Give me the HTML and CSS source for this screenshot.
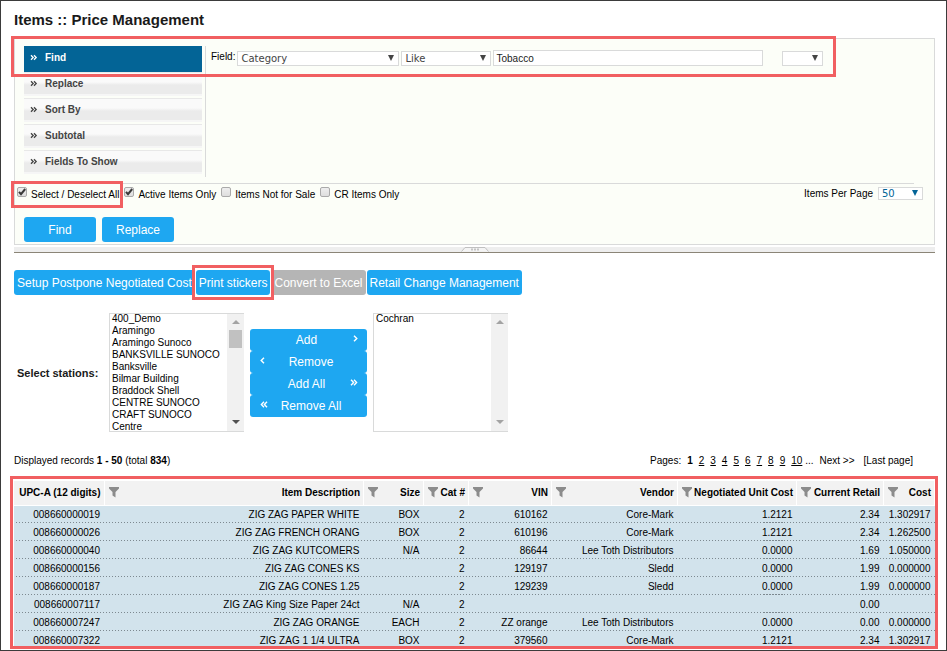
FILE: index.html
```html
<!DOCTYPE html>
<html lang="en">
<head>
<meta charset="utf-8">
<title>Items :: Price Management</title>
<link rel="stylesheet" href="styles.css">
</head>
<body>
<svg class="defs" aria-hidden="true">
  <symbol id="funnel" viewBox="0 0 10 11"><path d="M0 0H10V1.5L6.5 5V10.5L3.5 8.5V5L0 1.5Z"/></symbol>
  <symbol id="check" viewBox="0 0 10 10"><path d="M2 4.8L4 7.2L8.2 2" fill="none" stroke="#3a3a3a" stroke-width="2"/></symbol>
  <symbol id="chevron" viewBox="0 0 5 7"><path d="M1 .7L3.8 3.5L1 6.3" fill="none" stroke="currentColor" stroke-width="1.4"/></symbol>
  <symbol id="chevrons" viewBox="0 0 8 7"><path d="M1 .7L3.6 3.5L1 6.3M4 .7L6.6 3.5L4 6.3" fill="none" stroke="currentColor" stroke-width="1.4"/></symbol>
  <symbol id="bullet" viewBox="0 0 8 7"><path d="M1 1.2L3.2 3.5L1 5.8M4 1.2L6.2 3.5L4 5.8" fill="none" stroke="currentColor" stroke-width="1.3"/></symbol>
</svg>
<div class="page">
  <h1>Items :: Price Management</h1>

  <form class="panel">
    <div class="filters">
      <nav class="tabs">
        <a class="tab active" href="#find"><svg class="bullet"><use href="#bullet"/></svg>Find</a>
        <a class="tab" href="#replace"><svg class="bullet"><use href="#bullet"/></svg>Replace</a>
        <a class="tab" href="#sort"><svg class="bullet"><use href="#bullet"/></svg>Sort By</a>
        <a class="tab" href="#subtotal"><svg class="bullet"><use href="#bullet"/></svg>Subtotal</a>
        <a class="tab" href="#fields"><svg class="bullet"><use href="#bullet"/></svg>Fields To Show</a>
      </nav>
      <div class="criteria">
        <label for="field">Field:</label>
        <span class="drop field"><select id="field"><option>Category</option></select></span>
        <span class="drop operator"><select aria-label="Operator"><option>Like</option></select></span>
        <input class="value" type="text" value="Tobacco" aria-label="Value">
        <span class="drop join"><select aria-label="Join"><option></option></select></span>
      </div>
    </div>
    <div class="options">
      <div class="check"><span class="box"><input id="all" type="checkbox" checked><svg class="tick"><use href="#check"/></svg></span><label for="all">Select / Deselect All</label></div>
      <div class="check"><span class="box"><input id="active" type="checkbox" checked><svg class="tick"><use href="#check"/></svg></span><label for="active">Active Items Only</label></div>
      <div class="check"><span class="box"><input id="notsale" type="checkbox"></span><label for="notsale">Items Not for Sale</label></div>
      <div class="check"><span class="box"><input id="cr" type="checkbox"></span><label for="cr">CR Items Only</label></div>
      <div class="per-page"><label for="perpage">Items Per Page</label><span class="drop"><select id="perpage"><option>50</option></select></span></div>
      <span class="mark mark-all"></span>
    </div>
    <div class="submit">
      <button class="btn wide" type="button">Find</button>
      <button class="btn wide" type="button">Replace</button>
    </div>
    <span class="mark mark-find"></span>
  </form>
  <div class="splitter"><svg class="grip" viewBox="0 0 28 5"><path d="M.5 4.5L4 .5H24L27.5 4.5" fill="#f4f4f4" stroke="#c0c0c0"/><path d="M10 2.5H18" stroke="#c4c4c4" stroke-width="2" stroke-dasharray="2 1"/></svg></div>

  <div class="actions">
    <button class="btn" type="button">Setup Postpone Negotiated Cost</button>
    <span class="marked"><button class="btn" type="button">Print stickers</button><span class="mark mark-print"></span></span>
    <button class="btn" type="button" disabled>Convert to Excel</button>
    <button class="btn" type="button">Retail Change Management</button>
  </div>

  <div class="stations">
    <label class="stations-label" for="available">Select stations:</label>
    <div class="list">
      <select id="available" multiple>
        <option>400_Demo</option><option>Aramingo</option><option>Aramingo Sunoco</option><option>BANKSVILLE SUNOCO</option><option>Banksville</option><option>Bilmar Building</option><option>Braddock Shell</option><option>CENTRE SUNOCO</option><option>CRAFT SUNOCO</option><option>Centre</option>
      </select>
      <span class="scroll"><i class="up"></i><i class="thumb"></i><i class="down dark"></i></span>
    </div>
    <div class="movers">
      <button type="button" class="right">Add<svg class="one"><use href="#chevron"/></svg></button>
      <button type="button" class="left">Remove<svg class="one"><use href="#chevron"/></svg></button>
      <button type="button" class="right">Add All<svg class="two"><use href="#chevrons"/></svg></button>
      <button type="button" class="left">Remove All<svg class="two"><use href="#chevrons"/></svg></button>
    </div>
    <div class="list">
      <select multiple aria-label="Selected stations"><option>Cochran</option></select>
      <span class="scroll"><i class="up"></i><i class="down"></i></span>
    </div>
  </div>

  <div class="records">
    <span>Displayed records <b>1 - 50</b> (total <b>834</b>)</span>
    <nav class="pager"><span>Pages:</span><b>1</b><a href="#2">2</a><a href="#3">3</a><a href="#4">4</a><a href="#5">5</a><a href="#6">6</a><a href="#7">7</a><a href="#8">8</a><a href="#9">9</a><span><a href="#10">10</a> ...</span><a class="plain" href="#next">Next &gt;&gt;</a><a class="plain last" href="#last">[Last page]</a></nav>
  </div>

  <div class="grid">
    <table>
      <colgroup><col class="c-upc"><col><col class="c-size"><col class="c-cat"><col class="c-vin"><col class="c-vendor"><col class="c-unit"><col class="c-retail"><col class="c-cost"></colgroup>
      <thead>
        <tr>
          <th><div>UPC-A (12 digits)</div></th>
          <th><div><svg><use href="#funnel"/></svg>Item Description</div></th>
          <th><div><svg><use href="#funnel"/></svg>Size</div></th>
          <th><div><svg><use href="#funnel"/></svg>Cat #</div></th>
          <th><div><svg><use href="#funnel"/></svg>VIN</div></th>
          <th><div><svg><use href="#funnel"/></svg>Vendor</div></th>
          <th><div><svg><use href="#funnel"/></svg>Negotiated Unit Cost</div></th>
          <th><div><svg><use href="#funnel"/></svg>Current Retail</div></th>
          <th><div><svg><use href="#funnel"/></svg>Cost</div></th>
        </tr>
      </thead>
      <tbody>
        <tr><td>008660000019</td><td>ZIG ZAG PAPER WHITE</td><td>BOX</td><td>2</td><td>610162</td><td>Core-Mark</td><td>1.2121</td><td>2.34</td><td>1.302917</td></tr>
        <tr><td>008660000026</td><td>ZIG ZAG FRENCH ORANG</td><td>BOX</td><td>2</td><td>610196</td><td>Core-Mark</td><td>1.2121</td><td>2.34</td><td>1.262500</td></tr>
        <tr><td>008660000040</td><td>ZIG ZAG KUTCOMERS</td><td>N/A</td><td>2</td><td>86644</td><td>Lee Toth Distributors</td><td>0.0000</td><td>1.69</td><td>1.050000</td></tr>
        <tr><td>008660000156</td><td>ZIG ZAG CONES KS</td><td></td><td>2</td><td>129197</td><td>Sledd</td><td>0.0000</td><td>1.99</td><td>0.000000</td></tr>
        <tr><td>008660000187</td><td>ZIG ZAG CONES 1.25</td><td></td><td>2</td><td>129239</td><td>Sledd</td><td>0.0000</td><td>1.99</td><td>0.000000</td></tr>
        <tr><td>008660007117</td><td>ZIG ZAG King Size Paper 24ct</td><td>N/A</td><td>2</td><td></td><td></td><td></td><td>0.00</td><td></td></tr>
        <tr><td>008660007247</td><td>ZIG ZAG ORANGE</td><td>EACH</td><td>2</td><td>ZZ orange</td><td>Lee Toth Distributors</td><td>0.0000</td><td>0.00</td><td>0.000000</td></tr>
        <tr><td>008660007322</td><td>ZIG ZAG 1 1/4 ULTRA</td><td>BOX</td><td>2</td><td>379560</td><td>Core-Mark</td><td>1.2121</td><td>2.34</td><td>1.302917</td></tr>
      </tbody>
    </table>
    <span class="mark mark-grid"></span>
  </div>
</div>
</body>
</html>
```
FILE: styles.css
```css
* { box-sizing: border-box; }
body { margin: 0; background: #fff; color: #000; font: 10px/12px "Liberation Sans", Arial, sans-serif; }
button, input, select { font: inherit; color: inherit; margin: 0; }
a { color: inherit; }
.defs { position: absolute; width: 0; height: 0; }
.page { min-height: 100vh; border: 1px solid #3b3b3b; padding: 0 11px 0 13px; }
h1 { margin: 0; padding: 9px 0 8px; font-size: 15px; line-height: 20px; color: #1a1a1a; }

.mark { position: absolute; border: 3px solid #f15f61; pointer-events: none; }
.mark-find { top: -3px; left: -4px; width: 825px; height: 41px; }
.mark-all { top: -3px; left: -4px; width: 112px; height: 27px; }
.mark-print { inset: -5px -4px; }
.mark-grid { inset: -5px -3px 0 -4px; }

.panel { position: relative; border: 1px solid #d9dada; background: #fcfef8; }
.filters { display: flex; gap: 3px; padding: 7px 9px; }
.tabs { width: 178px; }
.tab { display: flex; align-items: center; gap: 7px; height: 26px; padding: 0 0 4px 6px; color: #444; font-weight: bold; text-decoration: none; border-top: 1px solid #e8e8e8; background: linear-gradient(#fafafa 0 9px, #ebebeb 12px 21px, #f6f6f6 21px 23px, #fcfef8 23px); }
.tab.active { color: #fff; background: #036496; border-color: #036496; }
.bullet { width: 8px; height: 7px; }
.criteria { display: flex; align-items: flex-start; flex: 1; min-height: 131px; border-left: 1px solid #d9dada; padding: 4px 0 0 5px; }
.criteria label { line-height: 14px; margin-right: 2px; }
.drop { position: relative; display: inline-flex; height: 15px; margin-top: 1px; color: #444; font-family: "DejaVu Sans", Verdana, sans-serif; }
.drop::after { content: ""; position: absolute; right: 5px; top: 4px; border: 3px solid transparent; border-top: 6px solid currentColor; border-bottom: 0; }
.drop select { appearance: none; width: 100%; border: 1px solid #d9dada; border-radius: 0; background: #fff; padding: 0 3px; line-height: 13px; }
.field { width: 162px; margin-right: 2px; }
.operator { width: 90px; margin-right: 2px; }
.value { width: 270px; height: 16px; border: 1px solid #d9dada; background: #fff; padding: 0 2px; margin-right: 19px; color: #222; }
.join { width: 41px; }

.options { position: relative; display: flex; align-items: flex-start; height: 28px; gap: 5px; padding: 3px 11px 0 2px; }
.options::before { content: ""; position: absolute; left: 0; right: 20px; top: -1px; border-top: 1px solid #d9dada; }
.check { display: flex; gap: 4px; }
.check label { line-height: 16px; }
.box { position: relative; width: 10px; height: 10px; }
.box input { appearance: none; display: block; width: 10px; height: 10px; border: 1px solid #aaa; border-radius: 2px; background: linear-gradient(#eee, #dedede); }
.tick { position: absolute; left: 0; top: 0; width: 10px; height: 10px; pointer-events: none; }
.per-page { display: flex; margin-left: auto; gap: 5px; line-height: 14px; }
.per-page .drop { width: 45px; height: 13px; margin: 0; color: #036496; }
.per-page .drop::after { top: 3px; }
.per-page select { line-height: 11px; }
.submit { display: flex; gap: 6px; padding: 5px 9px 2px; }

.btn { height: 25px; padding: 0 3px; border: 0; border-radius: 3px; background: #1ea7f1; color: #fff; font-size: 12px; white-space: nowrap; }
.btn:disabled { background: #b5b5b5; }
.wide { width: 72px; }
.splitter { display: flex; justify-content: center; height: 6px; margin: 2px 0 17px; background: #eee; border-bottom: 1px solid #8b8577; }
.grip { width: 28px; height: 5px; }
.actions { display: flex; gap: 1px; }
.marked { position: relative; }

.stations { display: flex; align-items: center; margin-top: 18px; }
.stations-label { width: 95px; padding-left: 3px; font-size: 11px; font-weight: bold; color: #1a1a1a; }
.list { display: flex; width: 135px; height: 119px; border: 1px solid #d9dada; border-right: 0; background: #fff; overflow: hidden; }
.list select { appearance: none; flex: 1; min-width: 0; border: 0; border-radius: 0; padding: 0; margin-top: -1px; overflow: hidden; background: #fff; outline: 0; }
.list option { min-height: 12px; padding: 0 2px; line-height: 12px; }
.scroll { display: flex; flex-direction: column; align-items: center; width: 17px; padding: 6px 0 7px; background: #f1f1f1; }
.scroll .up { border: 4px solid transparent; border-top: 0; border-bottom-color: #a3a3a3; }
.scroll .down { margin-top: auto; border: 4px solid transparent; border-bottom: 0; border-top-color: #a3a3a3; }
.scroll .dark { border-top-color: #505050; }
.thumb { width: 13px; height: 18px; margin-top: 6px; background: #c1c1c1; }
.movers { display: flex; flex-direction: column; width: 117px; margin: 0 6px; }
.movers button { display: flex; align-items: center; justify-content: center; position: relative; height: 22px; border: 0; border-radius: 3px; background: #1ea7f1; color: #fff; font-size: 12px; padding: 0 4px 0 0; }
.movers .left { padding: 0 0 0 5px; }
.movers svg { position: absolute; top: 6px; height: 7px; }
.movers .right svg { right: 9px; }
.movers .left svg { left: 10px; transform: scaleX(-1); }
.one { width: 5px; }
.two { width: 8px; }

.records { display: flex; justify-content: space-between; margin-top: 23px; padding-right: 22px; }
.pager { display: flex; gap: 6px; }
.plain { text-decoration: none; }
.last { margin-left: 3px; }

.grid { position: relative; margin-top: 14px; }
table { width: 100%; table-layout: fixed; border-collapse: collapse; }
.c-upc { width: 90px; } .c-size { width: 60px; } .c-cat { width: 45px; } .c-vin { width: 83px; } .c-vendor { width: 126px; } .c-unit { width: 119px; } .c-retail { width: 87px; } .c-cost { width: 51px; }
th { height: 24px; padding: 0; background: #f2f2f2; border-right: 1px solid #fff; border-bottom: 1px solid #fff; }
th div { display: flex; align-items: center; justify-content: flex-end; padding: 0 3px 0 4px; white-space: nowrap; }
th svg { width: 10px; height: 11px; margin-right: auto; fill: #8c8c8c; flex: none; }
td { height: 18px; padding: 1px 4px 0 0; text-align: right; white-space: nowrap; }
tbody tr { background: repeating-linear-gradient(90deg, #7d8990 0 1px, transparent 1px 3px) 2px 100% / 100% 1px no-repeat #d2e3ec; }
```
